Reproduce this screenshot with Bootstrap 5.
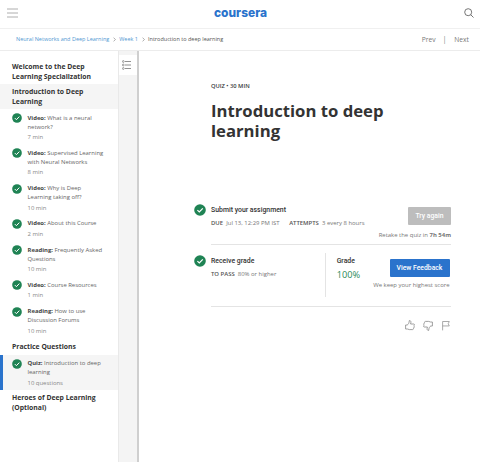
<!DOCTYPE html>
<html lang="en">
<head>
<meta charset="utf-8">
<meta name="viewport" content="width=device-width, initial-scale=1">
<title>Introduction to deep learning | Coursera</title>
<link href="https://cdn.jsdelivr.net/npm/bootstrap@5.3.0/dist/css/bootstrap.min.css" rel="stylesheet">
<style>
body{font-family:"Open Sans",sans-serif;color:#373a3c;font-size:5.92px;line-height:9px;height:462px;overflow:hidden;background:#fff}
svg{display:block;flex:none}
.topbar{height:29px;border-bottom:1px solid #f0f0f0;padding:0 6px 3px 7px}
.brand{overflow:visible;margin-left:-2px}
.crumbs{height:22px;border-bottom:1px solid #ececec;padding:0 11px 0 16px;font-size:5.5px;color:#555}
.crumbs a{color:#5298d2}
.crumbs .pager{font-size:6.7px;color:#777}
.crumbs .bar{padding:0 8px 0 7px}
.crumbs .sep{margin:0 3px 0 4px}
.shell{height:411px}
.lessons{width:118px;padding-top:8px;flex:none}
.module-title{font-size:6.83px;line-height:10px;font-weight:700;padding:2.5px 12px;color:#333}
.module-title.open,.lesson.current{background:#f5f5f5}
.module-title.single{padding-top:3.5px;padding-bottom:3.5px}
.lesson{padding:4.5px 0 2.3px 12px;color:#666;white-space:nowrap}
.lesson b{color:#444}
.lesson svg{margin-right:5.5px;margin-top:-.5px}
.lesson small{display:block;font-size:5.95px;line-height:10px;color:#888;padding-top:.5px}
.lesson.current{border-left:3px solid #2a73cc;padding:4px 0 2.800px 9px}
.rail{width:21px;flex:none;background:#f4f4f4;border-left:1px solid #e9e9e9;border-right:2px solid #cfcfcf;padding-top:4px}
.rail div{height:20px;background:#fff;padding-right:3px}
.quiz{width:240px;margin-left:72px}
.kicker{font-size:5.75px;font-weight:600;padding-top:30.5px}
.quiz h1{font-size:16.7px;line-height:20px;font-weight:700;color:#333;margin:10px 0 0}
.step{position:relative;border-bottom:1px solid #e4e4e4;height:51px;font-size:5.95px;color:#777}
.submit-step{margin-top:53px}
.step .tick{position:absolute;left:-17.5px;top:10px}
.step h2{font:500 6.9px/9px Roboto,sans-serif;color:#333;margin:0}
.step-text{padding-top:12.600px}
.step-text .note{margin-top:4.400px}
.label-strong{font-weight:600;color:#555}
.cta{font:500 6.8px/18px Roboto,sans-serif;height:18px;border:0;border-radius:1px;color:#fff;padding:0}
.cta-muted{width:43px;background:#bdbdbd}
.cta-blue{width:60px;background:#2a73cc}
.note{line-height:9px;white-space:nowrap}
.submit-action{padding-top:13px}
.note.retake{margin-top:6px}
.grade-step{height:62px}
.grade-box{border-left:1px solid #e4e4e4;height:44px;padding:4.600px 0 0 11px;margin-top:8px}
.grade-action{width:114px;margin-left:-23px;padding:14px 1.500px 0 0}
.score{font-size:9.2px;line-height:13px;color:#2a8a57;margin-top:2px}
.reactions{gap:8.500px;padding:13px 1.500px 0 0}
</style>
</head>
<body>
<svg width="0" height="0" class="position-absolute"><defs>
<symbol id="check" viewBox="0 0 12 12"><circle cx="6" cy="6" r="5.8" fill="#1f8354"/><path d="M3.4 6.1 5.3 8 8.8 4.3" fill="none" stroke="#fff" stroke-width="1.2"/></symbol>
<symbol id="thumb" viewBox="0 0 10 11"><path d="M.6 5h1.600C3.500 4.300 4.100 3 4.300.6c1.500-.2 2 .9 1.300 3.400h3.100c.9.100.9 1.300.2 1.500.6.400.5 1.300-.1 1.500.4.500.2 1.200-.4 1.400.2.700-.2 1.200-1 1.200H4.300L2.500 9H.6Z" fill="none" stroke="#888" stroke-width=".8"/></symbol>
<symbol id="chev" viewBox="0 0 4 6"><path d="M.8.5 3.200 3 .8 5.500" fill="none" stroke="#777" stroke-width=".8"/></symbol>
</defs></svg>
<header class="topbar d-flex align-items-center justify-content-between">
<svg width="11" height="10" viewBox="0 0 11 10"><path d="M0 1h11M0 5h11M0 9h11" stroke="#999" stroke-width=".8"/></svg>
<svg class="brand" width="53" height="16" viewBox="0 0 53 16"><text x="0" y="12" textLength="53" lengthAdjust="spacingAndGlyphs" font-family="Inter,sans-serif" font-weight="800" font-size="12.500" fill="#2a73cc">coursera</text></svg>
<svg width="10" height="10" viewBox="0 0 10 10"><circle cx="4.200" cy="4.200" r="3.500" fill="none" stroke="#666" stroke-width=".9"/><path d="m6.700 6.700 2.800 2.800" stroke="#666" stroke-width=".9"/></svg>
</header>
<nav class="crumbs d-flex align-items-center justify-content-between">
<div class="d-flex align-items-center"><a class="text-decoration-none" href="#">Neural Networks and Deep Learning</a><svg class="sep" width="3" height="5"><use href="#chev"/></svg><a class="text-decoration-none" href="#">Week 1</a><svg class="sep" width="3" height="5"><use href="#chev"/></svg><span>Introduction to deep learning</span></div>
<div class="pager d-flex"><span>Prev</span><span class="bar">|</span><span>Next</span></div>
</nav>
<div class="shell d-flex">
<aside class="lessons">
<div class="module-title">Welcome to the Deep<br>Learning Specialization</div>
<div class="module-title open">Introduction to Deep<br>Learning</div>
<div class="lesson d-flex"><svg width="10" height="10"><use href="#check"/></svg><div><b>Video:</b> What is a neural<br>network?<small>7 min</small></div></div>
<div class="lesson d-flex"><svg width="10" height="10"><use href="#check"/></svg><div><b>Video:</b> Supervised Learning<br>with Neural Networks<small>8 min</small></div></div>
<div class="lesson d-flex"><svg width="10" height="10"><use href="#check"/></svg><div><b>Video:</b> Why is Deep<br>Learning taking off?<small>10 min</small></div></div>
<div class="lesson d-flex"><svg width="10" height="10"><use href="#check"/></svg><div><b>Video:</b> About this Course<small>2 min</small></div></div>
<div class="lesson d-flex"><svg width="10" height="10"><use href="#check"/></svg><div><b>Reading:</b> Frequently Asked<br>Questions<small>10 min</small></div></div>
<div class="lesson d-flex"><svg width="10" height="10"><use href="#check"/></svg><div><b>Video:</b> Course Resources<small>1 min</small></div></div>
<div class="lesson d-flex"><svg width="10" height="10"><use href="#check"/></svg><div><b>Reading:</b> How to use<br>Discussion Forums<small>10 min</small></div></div>
<div class="module-title single">Practice Questions</div>
<div class="lesson current d-flex"><svg width="10" height="10"><use href="#check"/></svg><div><b>Quiz:</b> Introduction to deep<br>learning<small>10 questions</small></div></div>
<div class="module-title">Heroes of Deep Learning<br>(Optional)</div>
</aside>
<div class="rail"><div class="d-flex align-items-center justify-content-center"><svg width="9" height="10" viewBox="0 0 9 10"><path d="M3 1.500h6M3 5h6M3 8.500h6" stroke="#777" stroke-width=".8"/><g fill="none" stroke="#777" stroke-width=".7"><circle cx="1.300" cy="1.500" r=".9"/><circle cx="1.300" cy="5" r=".9"/><circle cx="1.300" cy="8.500" r=".9"/></g></svg></div></div>
<main class="quiz">
<div class="kicker">QUIZ • 30 MIN</div>
<h1>Introduction to deep<br>learning</h1>
<section class="step submit-step d-flex justify-content-between">
<svg class="tick" width="12" height="12"><use href="#check"/></svg>
<div class="step-text"><h2>Submit your assignment</h2><div class="note"><span class="label-strong">DUE</span>&nbsp; Jul 13, 12:29 PM IST <span class="label-strong ms-2">ATTEMPTS</span>&nbsp; 3 every 8 hours</div></div>
<div class="submit-action d-flex flex-column align-items-end"><button class="cta cta-muted">Try again</button><div class="note retake">Retake the quiz in <b>7h 54m</b></div></div>
</section>
<section class="step grade-step d-flex">
<svg class="tick" width="12" height="12"><use href="#check"/></svg>
<div class="step-text flex-grow-1"><h2>Receive grade</h2><div class="note"><span class="label-strong">TO PASS</span>&nbsp; 80% or higher</div></div>
<div class="grade-box"><h2>Grade</h2><div class="score">100%</div></div>
<div class="grade-action d-flex flex-column align-items-end"><button class="cta cta-blue">View Feedback</button><div class="note mt-1">We keep your highest score</div></div>
</section>
<div class="reactions d-flex justify-content-end align-items-center"><svg width="10" height="11"><use href="#thumb"/></svg><svg width="10" height="11" viewBox="0 0 10 11"><use href="#thumb" width="10" height="11" transform="rotate(180 5 5.500)"/></svg><svg width="8" height="11" viewBox="0 0 9 11"><path d="M.7 11V1h7.500L7 3.500 8.200 6H.7" fill="none" stroke="#888" stroke-width=".8"/></svg></div>
</main>
</div>
<script src="https://cdn.jsdelivr.net/npm/bootstrap@5.3.0/dist/js/bootstrap.bundle.min.js"></script>
</body>
</html>
